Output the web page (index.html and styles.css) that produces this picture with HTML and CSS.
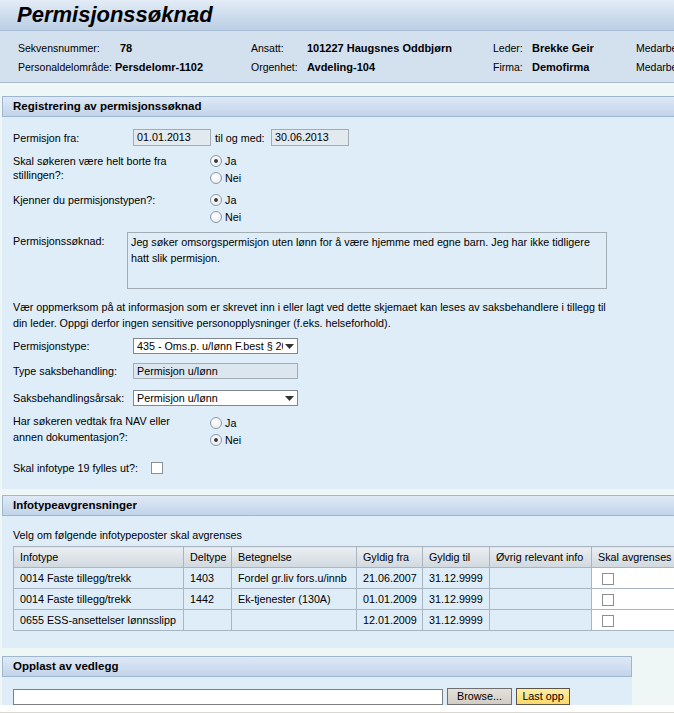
FILE: index.html
```html
<!DOCTYPE html>
<html lang="no">
<head>
<meta charset="utf-8">
<title>Permisjonssøknad</title>
<link rel="stylesheet" href="styles.css">
</head>
<body>
<div class="titlebar"><h1 class="title">Permisjonssøknad</h1></div>

<div class="info">
  <span class="lbl">Sekvensnummer:</span><span class="val val-shift">78</span>
  <span class="lbl">Ansatt:</span><span class="val">101227 Haugsnes Oddbjørn</span>
  <span class="lbl">Leder:</span><span class="val">Brekke Geir</span>
  <span class="lbl">Medarbeidergruppe:</span>
  <span class="lbl">Personaldelområde:</span><span class="val">Persdelomr-1102</span>
  <span class="lbl">Orgenhet:</span><span class="val">Avdeling-104</span>
  <span class="lbl">Firma:</span><span class="val">Demofirma</span>
  <span class="lbl">Medarbeiderundergruppe:</span>
</div>

<section class="tray tray-1">
  <div class="tray-head">Registrering av permisjonssøknad</div>
  <div class="tray-body">
    <div class="row row-dates">
      <span class="flabel">Permisjon fra:</span>
      <span class="field field-date">01.01.2013</span>
      <span class="til">til og med:</span>
      <span class="field field-date">30.06.2013</span>
    </div>

    <div class="row qrow q-borte">
      <span class="qlabel">Skal søkeren være helt borte fra<br>stillingen?:</span>
      <div class="radios">
        <span class="opt"><span class="radio on"></span>Ja</span>
        <span class="opt"><span class="radio"></span>Nei</span>
      </div>
    </div>

    <div class="row qrow q-kjenner">
      <span class="qlabel">Kjenner du permisjonstypen?:</span>
      <div class="radios">
        <span class="opt"><span class="radio on"></span>Ja</span>
        <span class="opt"><span class="radio"></span>Nei</span>
      </div>
    </div>

    <div class="row row-text">
      <span class="tlabel">Permisjonssøknad:</span>
      <div class="textarea">Jeg søker omsorgspermisjon uten lønn for å være hjemme med egne barn. Jeg har ikke tidligere hatt slik permisjon.</div>
    </div>

    <p class="note">Vær oppmerksom på at informasjon som er skrevet inn i eller lagt ved dette skjemaet kan leses av saksbehandlere i tillegg til<br>din leder. Oppgi derfor ingen sensitive personopplysninger (f.eks. helseforhold).</p>

    <div class="row row-sel r-type">
      <span class="flabel">Permisjonstype:</span>
      <div class="select"><span class="sel-text">435 - Oms.p. u/lønn F.best § 20</span><svg class="arrow" width="9" height="5" viewBox="0 0 9 5"><path d="M0 0H9L4.5 5Z" fill="#333"/></svg></div>
    </div>

    <div class="row row-sel r-saks">
      <span class="flabel">Type saksbehandling:</span>
      <span class="field field-ro">Permisjon u/lønn</span>
    </div>

    <div class="row row-sel r-arsak">
      <span class="flabel">Saksbehandlingsårsak:</span>
      <div class="select"><span class="sel-text">Permisjon u/lønn</span><svg class="arrow" width="9" height="5" viewBox="0 0 9 5"><path d="M0 0H9L4.5 5Z" fill="#333"/></svg></div>
    </div>

    <div class="row qrow q-nav">
      <span class="qlabel qlabel-16">Har søkeren vedtak fra NAV eller<br>annen dokumentasjon?:</span>
      <div class="radios radios-nav">
        <span class="opt"><span class="radio"></span>Ja</span>
        <span class="opt"><span class="radio on"></span>Nei</span>
      </div>
    </div>

    <div class="row row-check">
      <span class="clabel">Skal infotype 19 fylles ut?:</span>
      <span class="checkbox"></span>
    </div>
  </div>
</section>

<section class="tray tray-2">
  <div class="tray-head">Infotypeavgrensninger</div>
  <div class="tray-body">
    <p class="intro">Velg om følgende infotypeposter skal avgrenses</p>
    <table class="grid">
      <colgroup>
        <col class="c1"><col class="c2"><col class="c3"><col class="c4"><col class="c5"><col class="c6"><col class="c7">
      </colgroup>
      <thead>
        <tr><th>Infotype</th><th>Deltype</th><th>Betegnelse</th><th>Gyldig fra</th><th>Gyldig til</th><th>Øvrig relevant info</th><th>Skal avgrenses</th></tr>
      </thead>
      <tbody>
        <tr><td>0014 Faste tillegg/trekk</td><td>1403</td><td>Fordel gr.liv fors.u/innb</td><td>21.06.2007</td><td>31.12.9999</td><td></td><td class="white"><span class="checkbox"></span></td></tr>
        <tr><td>0014 Faste tillegg/trekk</td><td>1442</td><td>Ek-tjenester (130A)</td><td>01.01.2009</td><td>31.12.9999</td><td></td><td class="white"><span class="checkbox"></span></td></tr>
        <tr><td>0655 ESS-ansettelser lønnsslipp</td><td></td><td></td><td>12.01.2009</td><td>31.12.9999</td><td></td><td class="white"><span class="checkbox"></span></td></tr>
      </tbody>
    </table>
  </div>
</section>

<section class="tray tray-3">
  <div class="tray-head">Opplast av vedlegg</div>
  <div class="tray-body upload">
    <span class="file-input"></span>
    <span class="btn btn-browse">Browse...</span>
    <span class="btn btn-upload">Last opp</span>
  </div>
</section>

<div class="bottom-band"></div>
</body>
</html>
```

FILE: styles.css
```css
html, body {
  margin: 0;
  padding: 0;
  overflow: hidden;
}
body {
  width: 674px;
  height: 713px;
  background: #eef6f6;
  font-family: "Liberation Sans", Arial, sans-serif;
  font-size: 10.75px;
  color: #000;
}

/* Title */
.titlebar {
  height: 30px;
  border-bottom: 1px solid #a8bdd4;
  background: linear-gradient(#e3ecf6, #bacee4);
}
.title {
  margin: 0;
  padding-left: 17px;
  font: italic bold 22px/30px "Liberation Sans", Arial, sans-serif;
  color: #000;
}

/* Header info */
.info {
  display: grid;
  grid-template-columns: 97px 136px 56px 186px 39px 104px 220px;
  grid-auto-rows: 19px;
  align-items: center;
  padding: 7px 0 6px 18px;
  background: #d3e1ef;
  border-bottom: 1px solid #a9bacc;
  white-space: nowrap;
  overflow: hidden;
}
.info .lbl { font-size: 10.5px; }
.info .val { font-weight: bold; font-size: 11px; }
.info .val-shift { padding-left: 5px; }

/* Trays */
.tray { margin-left: 2px; }
.tray-1 { margin-top: 13px; }
.tray-2 { margin-top: 6px; }
.tray-3 { margin-top: 8px; width: 630px; }

.tray-head {
  height: 19px;
  line-height: 19px;
  border: 1px solid #9fb6cf;
  border-right: none;
  background: linear-gradient(#dfe9f6, #c2d4ea);
  padding-left: 10px;
  font-weight: bold;
  font-size: 11.5px;
  white-space: nowrap;
}
.tray-3 .tray-head { border-right: 1px solid #9fb6cf; }

.tray-body {
  background: #deedf7;
  padding: 12px 0 13px 11px;
  overflow: hidden;
}

/* Form rows */
.row {
  display: flex;
  align-items: center;
}
.flabel { width: 120px; flex: none; white-space: nowrap; }
.field {
  display: block;
  box-sizing: border-box;
  height: 17px;
  line-height: 15px;
  padding-left: 3px;
  border: 1px solid #a3abb3;
  background: #e2e9ef;
  white-space: nowrap;
}
.field-date { width: 78px; }
.til { width: 56px; flex: none; margin-left: 4px; white-space: nowrap; }

.qrow { align-items: flex-start; }
.q-borte { margin-top: 6px; }
.q-kjenner { margin-top: 5px; }
.qlabel {
  width: 197px;
  flex: none;
  line-height: 14px;
  padding-top: 2px;
}
.qlabel-16 { line-height: 16px; padding-top: 0; margin-top: -1px; }
.radios { display: flex; flex-direction: column; }
.opt {
  display: flex;
  align-items: center;
  height: 17px;
}
.radios-nav .opt { height: 17.5px; }
.radio {
  box-sizing: border-box;
  width: 12px;
  height: 12px;
  margin-right: 3px;
  border: 1px solid #8b98a5;
  border-radius: 50%;
  background: radial-gradient(circle at 40% 35%, #ffffff, #e6e9ec);
  position: relative;
}
.radio.on::after {
  content: "";
  position: absolute;
  left: 3px;
  top: 3px;
  width: 4px;
  height: 4px;
  border-radius: 50%;
  background: #3a3a3a;
}

.row-text { margin-top: 7px; align-items: flex-start; }
.tlabel { width: 114px; flex: none; line-height: 16px; padding-top: 1px; }
.textarea {
  box-sizing: border-box;
  width: 480px;
  height: 57px;
  padding: 1px 3px;
  border: 1px solid #a3abb3;
  line-height: 16px;
}

.note {
  margin: 10px 0 0;
  width: 640px;
  line-height: 16px;
  white-space: nowrap;
}

.row-sel .select,
.row-sel .field-ro {
  box-sizing: border-box;
  width: 165px;
  height: 16px;
}
.r-type { margin-top: 7px; }
.r-saks { margin-top: 9px; }
.r-arsak { margin-top: 11px; }
.field-ro {
  line-height: 14px;
  background: #dce6ee;
  padding-left: 3px;
}
.select {
  display: flex;
  align-items: center;
  background: #fff;
  border: 1px solid #7f8890;
  padding-left: 3px;
  overflow: hidden;
}
.sel-text {
  flex: 1;
  overflow: hidden;
  white-space: nowrap;
  line-height: 14px;
}
.arrow { flex: none; margin: 0 3px 0 2px; }

.q-nav { margin-top: 8px; }

.row-check { margin-top: 10px; height: 17px; }
.clabel { width: 138px; flex: none; white-space: nowrap; }
.checkbox {
  display: inline-block;
  box-sizing: border-box;
  width: 12px;
  height: 12px;
  border: 1px solid #8a8f94;
  background: #fff;
  vertical-align: middle;
}

/* Table tray */
.intro { margin: -1px 0 0; line-height: 16px; }
.grid {
  margin-top: 3px;
  border-collapse: collapse;
  table-layout: fixed;
  width: 687px;
  margin-bottom: 4px;
}
.c1 { width: 170px; }
.c2 { width: 48px; }
.c3 { width: 125px; }
.c4 { width: 66px; }
.c5 { width: 67px; }
.c6 { width: 102px; }
.c7 { width: 109px; }
.grid th,
.grid td {
  height: 20px;
  padding: 0 0 0 6px;
  border: 1px solid #a9b5c0;
  text-align: left;
  font-weight: normal;
  white-space: nowrap;
  overflow: hidden;
}
.grid th { background: linear-gradient(#ebeff3, #d0d8df); }
.grid td.white { background: #fff; padding-left: 10px; }

/* Upload tray */
.upload {
  display: flex;
  align-items: center;
  padding: 11px 0 0 11px;
}
.file-input {
  box-sizing: border-box;
  width: 430px;
  height: 16px;
  border: 1px solid #7f7f7f;
  background: #fff;
}
.btn {
  box-sizing: border-box;
  height: 17px;
  line-height: 15px;
  text-align: center;
  border: 1px solid #6f6f6f;
}
.btn-browse {
  width: 65px;
  margin-left: 4px;
  background: linear-gradient(#e4e1da, #d2cec6);
}
.btn-upload {
  width: 54px;
  margin-left: 4px;
  background: linear-gradient(#ffeea6, #fbd86a);
  border-color: #5d5443;
}

.bottom-band {
  height: 7px;
  background: #fff;
  border-bottom: 3px solid #d9d7d1;
}
```
